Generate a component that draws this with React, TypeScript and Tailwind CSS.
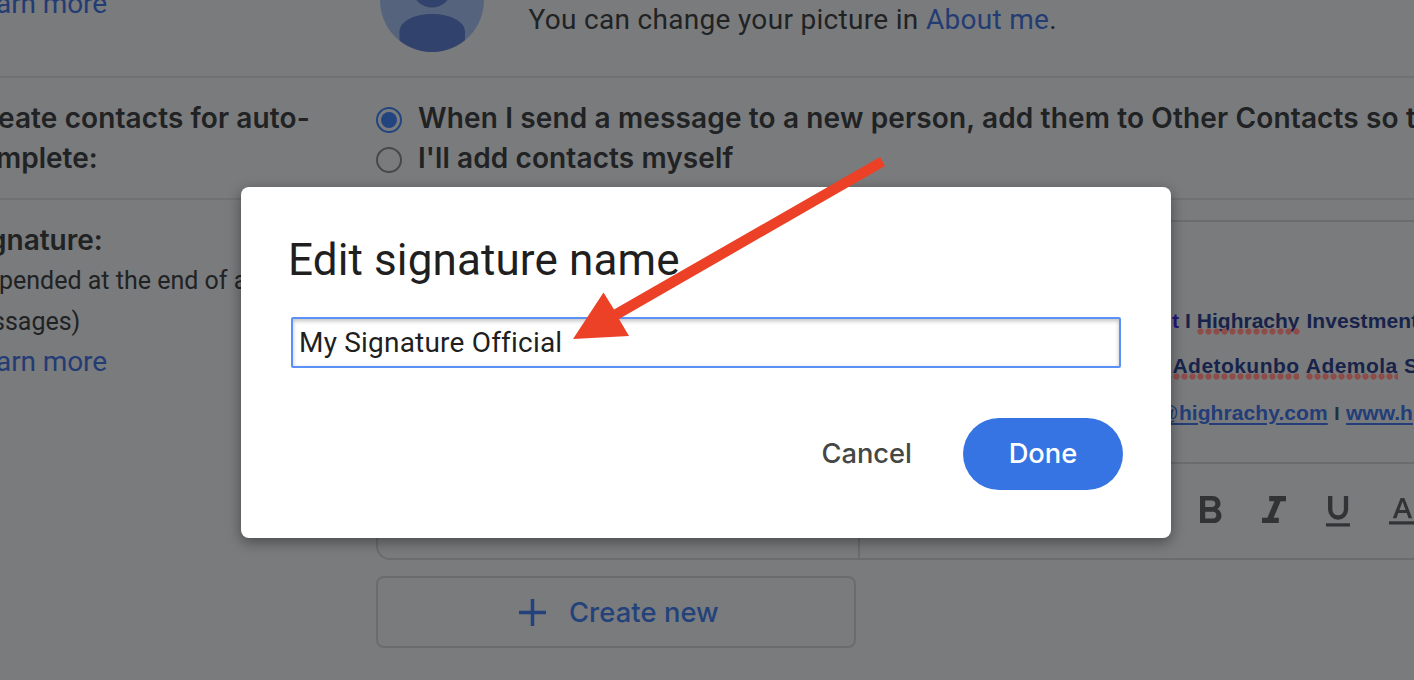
import type { ReactNode } from "react";

function Squiggle({ children }: { children: ReactNode }) {
  return (
    <span className="relative inline-block">
      {children}
      <span className="absolute inset-x-0 top-[21px] h-[7px] bg-[radial-gradient(circle_at_3.5px_3.5px,#8d4d4a_2.8px,transparent_3.5px)] bg-[length:8px_7px]" />
    </span>
  );
}

function Avatar() {
  return (
    <svg className="-mt-[52px] h-[104px] w-[104px] shrink-0" viewBox="0 0 104 104">
      <defs>
        <clipPath id="avatar-clip">
          <circle cx="52" cy="52" r="52" />
        </clipPath>
      </defs>
      <g clipPath="url(#avatar-clip)">
        <rect width="104" height="104" fill="#56637d" />
        <circle cx="52" cy="39.5" r="20" fill="#31426c" />
        <path d="M19.5 104V84c0-11 15-18 32.500-18s33 7 33 18v20z" fill="#31426c" />
      </g>
    </svg>
  );
}

function Radio({ checked }: { checked?: boolean }) {
  return checked ? (
    <span className="mt-[9px] flex size-[26px] shrink-0 items-center justify-center rounded-full border-2 border-[#23457f]">
      <span className="size-4 rounded-full bg-[#23457f]" />
    </span>
  ) : (
    <span className="mt-[9px] size-[26px] shrink-0 rounded-full border-2 border-[#46484a]" />
  );
}

function Toolbar() {
  return (
    <div className="flex h-[94px] items-start fill-[#313335] pt-[32px] pl-[339px]">
      <svg className="mr-[40.500px] ml-px h-[27px] w-[21.500px] shrink-0" viewBox="7 4 10.75 14" preserveAspectRatio="none">
        <path d="M15.6 10.79c.97-.67 1.65-1.77 1.65-2.79 0-2.26-1.75-4-4-4H7v14h7.04c2.09 0 3.71-1.7 3.71-3.79 0-1.52-.86-2.82-2.15-3.42zM9.600 6.300h3.400c.95 0 1.700.75 1.700 1.700s-.75 1.700-1.700 1.700H9.600zm3.900 9.400H9.600v-3.500h3.900c.95 0 1.700.8 1.700 1.750s-.75 1.750-1.700 1.750z" />
      </svg>
      <svg className="mr-10 h-[27px] w-6 shrink-0" viewBox="6 4 12 14" preserveAspectRatio="none">
        <path d="M9.600 4v2.700h2.600l-3.500 8.600H6V18h8.400v-2.700h-2.600l3.500-8.600H18V4z" />
      </svg>
      <svg className="mr-[38.500px] h-[31px] w-6 shrink-0" viewBox="0 0 24 31">
        <path d="M4.200 0v13.500a7.900 8 0 0 0 15.800 0V0" fill="none" stroke="#313335" strokeWidth="4.300" />
        <path d="M0 27.300h24v3.200H0z" />
      </svg>
      <svg className="mt-[2px] h-7 w-[27px] shrink-0" viewBox="0 0 27 28">
        <path transform="translate(3.800 0) scale(1.490 1.440) translate(-5.490 -3)" d="M5.490 17h2.420l1.270-3.580h5.650L16.090 17h2.420L13.250 3h-2.500L5.490 17zm4.420-5.610 2.030-5.790h.12l2.030 5.790H9.910z" />
        <path d="M0 23.300h27v3.200H0z" />
      </svg>
    </div>
  );
}

function SettingsPage() {
  return (
    <div className="flex h-[680px] w-[1414px] flex-col overflow-hidden bg-[#7a7b7d] font-['Roboto','Noto_Sans',sans-serif] text-[28px] leading-10 whitespace-nowrap text-[#202224]">
      <section className="flex h-[78px] shrink-0 border-b-2 border-[#707173]">
        <div className="w-[380px] shrink-0">
          <a className="-mt-4 -ml-[4px] block tracking-[-0.1px] text-[#233c74]">arn more</a>
        </div>
        <Avatar />
        <p className="ml-[44.500px] tracking-[0.31px]">
          You can change your picture in <a className="text-[#233c74]">About me</a>.
        </p>
      </section>

      <section className="flex h-[122px] shrink-0 border-b-2 border-[#707173] pt-[20px] font-['Inter','Noto_Sans',sans-serif] font-semibold">
        <div className="w-[376px] shrink-0">
          <div className="-ml-[2px] tracking-[0.1px]">eate contacts for auto-</div>
          <div className="-ml-[4px]">mplete:</div>
        </div>
        <div>
          <div className="flex h-10">
            <Radio checked />
            <span className="ml-[16px] tracking-[0.14px]">
              When I send a message to a new person, add them to Other Contacts so t
            </span>
          </div>
          <div className="flex h-10">
            <Radio />
            <span className="ml-[16px] tracking-[0.1px]">I'll add contacts myself</span>
          </div>
        </div>
      </section>

      <section className="flex grow">
        <div className="w-[376px] shrink-0 pt-[20px]">
          <div className="-ml-[11px] font-['Inter','Noto_Sans',sans-serif] font-semibold">gnature:</div>
          <div className="-ml-px text-[25px] leading-[41px]">
            <div>pended at the end of a</div>
            <div className="-ml-[7px]">ssages)</div>
          </div>
          <a className="-ml-[4px] block tracking-[-0.1px] text-[#233c74]">arn more</a>
        </div>
        <div className="pt-5">
          <div className="flex h-[340px] w-[1100px] rounded-[14px] border-2 border-[#6b6c6e]">
            <div className="w-[482px] shrink-0 border-r-2 border-[#6b6c6e]" />
            <div className="flex grow flex-col">
              <div className="h-[242px] shrink-0 border-b-2 border-[#6b6c6e] pt-[85px] font-['Liberation_Sans',Arial,sans-serif] text-[21px] leading-[28px] font-bold text-[#17234a]">
                <div className="pl-[312px]">
                  <span className="text-[#23177a]">t</span>
                  <span className="mr-[6px] ml-[6px]">I</span>
                  <Squiggle>Highrachy</Squiggle> <span className="ml-px tracking-[0.1px]">Investment</span>
                </div>
                <div className="mt-[17px] pl-[312.500px] tracking-[0.45px]">
                  <Squiggle>Adetokunbo</Squiggle> <Squiggle>Ademola</Squiggle> S
                </div>
                <div className="mt-[19px] pl-[298.500px] text-[#223d77]">
                  <span className="tracking-[0.08px] underline decoration-2 underline-offset-[3px]">
                    <span className="text-[20px] font-normal">@</span>highrachy.com
                  </span>
                  <span className="mx-[6.500px] text-[19px] text-[#23303a]">I</span>
                  <span className="underline decoration-2 underline-offset-[3px]">www.h</span>
                </div>
              </div>
              <Toolbar />
            </div>
          </div>
          <button className="mt-4 flex h-[72px] w-[480px] items-center rounded-lg border-2 border-[#6b6c6e] pl-[141px] font-['Inter','Noto_Sans',sans-serif] text-[27.300px] font-medium text-[#23427c]">
            <svg className="size-[27px]" viewBox="0 0 27 27" fill="none" stroke="currentColor" strokeWidth="3.500">
              <path d="M13.500 0v27M0 13.500h27" />
            </svg>
            <span className="mt-0.5 ml-[23px] tracking-[0.1px]">Create new</span>
          </button>
        </div>
      </section>
    </div>
  );
}

function EditDialog() {
  return (
    <div className="absolute top-[187px] left-[241px] flex h-[351px] w-[930px] flex-col rounded-lg bg-white pt-[45px] pr-12 pl-[50px] font-['Roboto','Noto_Sans',sans-serif] text-[28px] shadow-[0_4px_14px_rgba(0,0,0,0.4)]">
      <h1 className="-ml-[3px] text-[44px] leading-[56px] tracking-[0.12px] whitespace-nowrap text-[#1f1f1f]">Edit signature name</h1>
      <input
        type="text"
        defaultValue="My Signature Official"
        className="mt-[29px] h-[51px] w-[830px] shrink-0 rounded-[2px] border-2 border-[#5b90f7] bg-white pl-[6px] tracking-[0.2px] text-[#1f1f1f] shadow-[inset_0_2px_4px_rgba(0,0,0,0.25)] outline-none"
      />
      <div className="mt-[50px] flex items-center justify-end font-['Inter','Noto_Sans',sans-serif] text-[27.300px] font-medium">
        <button className="mr-[51px] text-[#444746]">Cancel</button>
        <button className="h-[72px] w-40 rounded-full bg-[#3574e2] text-white">Done</button>
      </div>
    </div>
  );
}

export default function App() {
  return (
    <main className="relative h-[680px] w-[1414px] overflow-hidden">
      <SettingsPage />
      <EditDialog />
      <svg className="pointer-events-none absolute inset-0" width="1414" height="680" viewBox="0 0 1414 680">
        <path d="M573 339 603.500 292.500 614 309.500 880 157 885 166 619 319 629 336z" fill="#ec4126" />
      </svg>
    </main>
  );
}
